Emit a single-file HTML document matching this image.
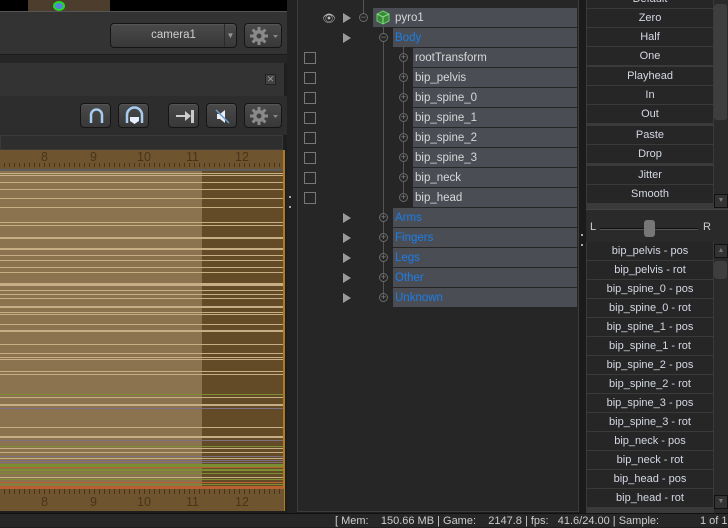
<!DOCTYPE html>
<html><head><meta charset="utf-8"><style>
*{margin:0;padding:0;box-sizing:border-box}
body{width:728px;height:527px;background:#1e1e1e;position:relative;overflow:hidden;font-family:"Liberation Sans",Tahoma,sans-serif;font-size:11px}
.a{position:absolute}
.btn{position:absolute;border:1px solid #151515;border-radius:4px;background:linear-gradient(#4a4a4a,#383838);box-shadow:inset 0 1px 0 #555}
.btn svg{position:absolute;left:0;top:0}
.row{position:absolute;height:19px;background:#4b4d55;color:#d8d8d8;line-height:20px;font-size:11.5px;padding-left:2px}
.grp{color:#1a7ee8}
.ln{position:absolute;left:0;width:283px;height:1px;background:#c8ae84}
.rb{position:absolute;left:587px;width:126px;height:18px;background:#262626;color:#d4d8e4;text-align:center;line-height:18px;font-size:11px}
.tri{position:absolute;width:0;height:0;border-top:5px solid transparent;border-bottom:5px solid transparent;border-left:8px solid #9a9a9a}
.pm{position:absolute;width:9px;height:9px;border:1px solid #6a6a6a;border-radius:50%;color:#888;font-size:9px;line-height:7px;text-align:center;background:#262626}
.cb{position:absolute;left:304px;width:12px;height:12px;border:1px solid #777}
.rn span{position:absolute;font-size:12.5px}
</style></head><body>
<div class="a" style="left:0;top:0;width:287px;height:11px;background:#000"></div>
<div class="a" style="left:28px;top:0;width:82px;height:11px;background:#4d3d2d"></div>
<div class="a" style="left:53px;top:1px;width:12px;height:10px;border-radius:50%;background:#5a7fe0;border:2px solid #1ee01e"></div>
<div class="a" style="left:0;top:11px;width:287px;height:43px;background:#333;border-top:1px solid #555"></div>
<div class="btn" style="left:110px;top:23px;width:127px;height:25px;color:#cfcfcf;text-align:center;line-height:23px;font-size:11.5px">camera1<span style="position:absolute;right:0;top:0;width:12px;height:23px;border-left:1px solid #2a2a2a;color:#999;font-size:8px">▼</span></div>
<div class="btn" style="left:244px;top:23px;width:38px;height:25px"><svg width="38" height="25"><g transform="translate(14,12)" fill="#8a8a8a"><circle r="6"/><g stroke="#8a8a8a" stroke-width="3"><line x1="0" y1="-9" x2="0" y2="9"/><line x1="-9" y1="0" x2="9" y2="0"/><line x1="-6.4" y1="-6.4" x2="6.4" y2="6.4"/><line x1="-6.4" y1="6.4" x2="6.4" y2="-6.4"/></g><circle r="2.5" fill="#404040"/></g><path d="M28 11h5l-2.5 3z" fill="#888"/></svg></div>
<div class="a" style="left:0;top:54px;width:287px;height:9px;background:#262626;border-top:1px solid #1a1a1a"></div>
<div class="a" style="left:0;top:63px;width:284px;height:33px;background:#333"></div>
<div class="a" style="left:265px;top:74px;width:11px;height:11px;background:#444;border:1px solid #222;color:#999;font-size:9px;line-height:9px;text-align:center">✕</div>
<div class="a" style="left:0;top:96px;width:287px;height:39px;background:#2d2d2d"></div>
<div class="btn" style="left:80px;top:103px;width:31px;height:25px"><svg width="31" height="25"><path d="M10 19V11a5.5 5.5 0 0 1 11 0v8" fill="none" stroke="#a8cdf0" stroke-width="2.5"/></svg></div>
<div class="btn" style="left:118px;top:103px;width:31px;height:25px"><svg width="31" height="25"><path d="M8 19V11a7.5 7.5 0 0 1 15 0v8" fill="none" stroke="#a8cdf0" stroke-width="2.5"/><path d="M11 13h9v4l-4.5 3l-4.5-3z" fill="#e8f0ff"/></svg></div>
<div class="btn" style="left:168px;top:103px;width:31px;height:25px"><svg width="31" height="25"><path d="M7 11h9V7l6 5l-6 5v-4H7z" fill="#ccc"/><rect x="22" y="6" width="3" height="13" fill="#ccc"/></svg></div>
<div class="btn" style="left:206px;top:103px;width:31px;height:25px"><svg width="31" height="25"><path d="M10 10h3l5-4v13l-5-4h-3z" fill="#e8eef8"/><line x1="9" y1="6" x2="22" y2="19" stroke="#6a9ad0" stroke-width="1.5"/></svg></div>
<div class="btn" style="left:244px;top:103px;width:38px;height:25px"><svg width="38" height="25"><g transform="translate(14,12)" fill="#8a8a8a"><circle r="6"/><g stroke="#8a8a8a" stroke-width="3"><line x1="0" y1="-9" x2="0" y2="9"/><line x1="-9" y1="0" x2="9" y2="0"/><line x1="-6.4" y1="-6.4" x2="6.4" y2="6.4"/><line x1="-6.4" y1="6.4" x2="6.4" y2="-6.4"/></g><circle r="2.5" fill="#404040"/></g><path d="M28 11h5l-2.5 3z" fill="#888"/></svg></div>
<div class="a" style="left:0;top:135px;width:283px;height:15px;background:#2e2e2e;border:1px solid #3a3a3a"></div>
<div class="a rn" style="left:0;top:150px;width:284px;height:21px;background:#6e5530;border-bottom:2px solid #5c5c5c;color:#4a3418">
<div class="a" style="left:0;top:13px;width:284px;height:4px;background:repeating-linear-gradient(90deg,transparent 0 4px,#4a3418 4px 5px)"></div>
<span style="left:41px;top:0">8</span><span style="left:90px;top:0">9</span><span style="left:137px;top:0">10</span><span style="left:186px;top:0">11</span><span style="left:235px;top:0">12</span></div>
<div class="a" style="left:0;top:171px;width:202px;height:318px;background:#8b7350"></div>
<div class="a" style="left:202px;top:171px;width:82px;height:318px;background:#634b27"></div>
<div class="a" style="left:283px;top:150px;width:2px;height:361px;background:#b07a20"></div>
<div class="ln" style="top:173px"></div><div class="ln" style="top:175px"></div><div class="ln" style="top:182px"></div><div class="ln" style="top:189px"></div><div class="ln" style="top:198px"></div><div class="ln" style="top:207px"></div><div class="ln" style="top:222px"></div><div class="ln" style="top:225px"></div><div class="ln" style="top:237px;height:2px"></div><div class="ln" style="top:248px;height:2px"></div><div class="ln" style="top:255px"></div><div class="ln" style="top:260px"></div><div class="ln" style="top:267px"></div><div class="ln" style="top:272px"></div><div class="ln" style="top:283px;height:3px"></div><div class="ln" style="top:290px"></div><div class="ln" style="top:294px"></div><div class="ln" style="top:298px"></div><div class="ln" style="top:306px;height:2px"></div><div class="ln" style="top:312px"></div><div class="ln" style="top:314px"></div><div class="ln" style="top:324px"></div><div class="ln" style="top:330px;height:2px"></div><div class="ln" style="top:344px"></div><div class="ln" style="top:353px"></div><div class="ln" style="top:357px"></div><div class="ln" style="top:359px"></div><div class="ln" style="top:371px"></div><div class="ln" style="top:374px"></div><div class="ln" style="top:394px;background:#7a9030"></div><div class="ln" style="top:397px"></div><div class="ln" style="top:404px;height:2px"></div><div class="ln" style="top:408px;background:#7a7080"></div><div class="ln" style="top:427px"></div><div class="ln" style="top:436px;height:2px"></div><div class="ln" style="top:440px;background:#7a7080"></div><div class="ln" style="top:446px;background:#7a9030"></div><div class="ln" style="top:448px"></div><div class="ln" style="top:452px"></div><div class="ln" style="top:456px;background:#7a7080"></div><div class="ln" style="top:458px"></div><div class="ln" style="top:460px;background:#7a7080"></div><div class="ln" style="top:462px;background:#7a7080"></div><div class="ln" style="top:464px;height:3px;background:#7a9030"></div><div class="ln" style="top:467px;background:#b86030"></div><div class="ln" style="top:469px;height:2px;background:#7a9030"></div><div class="ln" style="top:473px;background:#7a9030"></div><div class="ln" style="top:477px"></div><div class="ln" style="top:479px;background:#7a9030"></div><div class="ln" style="top:482px;background:#b86030"></div><div class="ln" style="top:484px;background:#7a9030"></div><div class="ln" style="top:486px;height:3px;background:#b86030"></div>
<div class="a rn" style="left:0;top:489px;width:284px;height:22px;background:#6e5530;color:#4a3418">
<div class="a" style="left:0;top:0;width:284px;height:5px;background:repeating-linear-gradient(90deg,transparent 0 4px,#4a3418 4px 5px)"></div>
<span style="left:41px;top:6px">8</span><span style="left:90px;top:6px">9</span><span style="left:137px;top:6px">10</span><span style="left:186px;top:6px">11</span><span style="left:235px;top:6px">12</span></div>
<div class="a" style="left:287px;top:0;width:10px;height:513px;background:#222"></div>
<div class="a" style="left:289px;top:196px;width:2px;height:12px;border-top:2px dotted #aaa;border-bottom:2px dotted #aaa"></div>
<div class="a" style="left:297px;top:0;width:282px;height:512px;background:#262626;border:1px solid #3c3c3c;border-top:none"></div>
<div class="a" style="left:579px;top:0;width:7px;height:513px;background:#1b1b1b"></div>
<div class="a" style="left:581px;top:234px;width:2px;height:12px;border-top:2px dotted #aaa;border-bottom:2px dotted #aaa"></div>
<div class="a" style="left:363px;top:0;width:1px;height:20px;background:#555"></div>
<div class="a" style="left:383px;top:20px;width:1px;height:280px;background:#555"></div>
<div class="a" style="left:403px;top:40px;width:1px;height:160px;background:#555"></div>
<div class="a" style="left:322px;top:12px;color:#bbb;font-size:11px">👁</div>
<div class="tri" style="left:343px;top:13px"></div><div class="pm" style="left:359px;top:13px">−</div>
<div class="row" style="left:373px;top:8px;width:204px;padding-left:22px">pyro1</div>
<svg class="a" style="left:376px;top:10px" width="14" height="15"><path d="M7 1l6 3v7l-6 3l-6-3V4z" fill="#3a8a3a" stroke="#6ad06a"/><path d="M1 4l6 3l6-3M7 7v7" fill="none" stroke="#8ae08a"/></svg>
<div class="tri" style="left:343px;top:33px"></div><div class="pm" style="left:379px;top:33px">−</div>
<div class="row grp" style="left:393px;top:28px;width:184px">Body</div>
<div class="cb" style="top:52px"></div><div class="pm" style="left:399px;top:53px">+</div><div class="row" style="left:413px;top:48px;width:164px">rootTransform</div>
<div class="cb" style="top:72px"></div><div class="pm" style="left:399px;top:73px">+</div><div class="row" style="left:413px;top:68px;width:164px">bip_pelvis</div>
<div class="cb" style="top:92px"></div><div class="pm" style="left:399px;top:93px">+</div><div class="row" style="left:413px;top:88px;width:164px">bip_spine_0</div>
<div class="cb" style="top:112px"></div><div class="pm" style="left:399px;top:113px">+</div><div class="row" style="left:413px;top:108px;width:164px">bip_spine_1</div>
<div class="cb" style="top:132px"></div><div class="pm" style="left:399px;top:133px">+</div><div class="row" style="left:413px;top:128px;width:164px">bip_spine_2</div>
<div class="cb" style="top:152px"></div><div class="pm" style="left:399px;top:153px">+</div><div class="row" style="left:413px;top:148px;width:164px">bip_spine_3</div>
<div class="cb" style="top:172px"></div><div class="pm" style="left:399px;top:173px">+</div><div class="row" style="left:413px;top:168px;width:164px">bip_neck</div>
<div class="cb" style="top:192px"></div><div class="pm" style="left:399px;top:193px">+</div><div class="row" style="left:413px;top:188px;width:164px">bip_head</div>
<div class="tri" style="left:343px;top:213px"></div><div class="pm" style="left:379px;top:213px">+</div><div class="row grp" style="left:393px;top:208px;width:184px">Arms</div>
<div class="tri" style="left:343px;top:233px"></div><div class="pm" style="left:379px;top:233px">+</div><div class="row grp" style="left:393px;top:228px;width:184px">Fingers</div>
<div class="tri" style="left:343px;top:253px"></div><div class="pm" style="left:379px;top:253px">+</div><div class="row grp" style="left:393px;top:248px;width:184px">Legs</div>
<div class="tri" style="left:343px;top:273px"></div><div class="pm" style="left:379px;top:273px">+</div><div class="row grp" style="left:393px;top:268px;width:184px">Other</div>
<div class="tri" style="left:343px;top:293px"></div><div class="pm" style="left:379px;top:293px">+</div><div class="row grp" style="left:393px;top:288px;width:184px">Unknown</div>
<div class="a" style="left:586px;top:0;width:142px;height:209px;background:#3a3a3a"></div>
<div class="rb" style="top:-10px">Default</div><div class="rb" style="top:9px">Zero</div><div class="rb" style="top:28px">Half</div><div class="rb" style="top:47px">One</div>
<div class="rb" style="top:67px">Playhead</div><div class="rb" style="top:86px">In</div><div class="rb" style="top:105px">Out</div>
<div class="rb" style="top:126px">Paste</div><div class="rb" style="top:145px">Drop</div>
<div class="rb" style="top:166px">Jitter</div><div class="rb" style="top:185px">Smooth</div>
<div class="a" style="left:714px;top:0;width:14px;height:208px;background:#2a2a2a"></div>
<div class="a" style="left:714px;top:4px;width:13px;height:116px;background:#3e3e3e;border-radius:3px"></div>
<div class="a" style="left:714px;top:194px;width:14px;height:14px;background:#333;border:1px solid #111;color:#777;font-size:7px;text-align:center;line-height:12px">▼</div>
<div class="a" style="left:586px;top:209px;width:142px;height:33px;background:#2a2a2a;border-top:1px solid #444"></div>
<div class="a" style="left:590px;top:221px;color:#ccc">L</div><div class="a" style="left:703px;top:221px;color:#ccc">R</div>
<div class="a" style="left:600px;top:228px;width:98px;height:2px;background:#111;border-bottom:1px solid #555"></div>
<div class="a" style="left:644px;top:220px;width:11px;height:17px;background:#777;border-radius:3px"></div>
<div class="a" style="left:586px;top:242px;width:128px;height:271px;background:#3a3a3a"></div>
<div class="a" style="left:714px;top:242px;width:14px;height:271px;background:#2a2a2a"></div>
<div class="rb" style="top:242px">bip_pelvis - pos</div><div class="rb" style="top:261px">bip_pelvis - rot</div><div class="rb" style="top:280px">bip_spine_0 - pos</div><div class="rb" style="top:299px">bip_spine_0 - rot</div><div class="rb" style="top:318px">bip_spine_1 - pos</div><div class="rb" style="top:337px">bip_spine_1 - rot</div><div class="rb" style="top:356px">bip_spine_2 - pos</div><div class="rb" style="top:375px">bip_spine_2 - rot</div><div class="rb" style="top:394px">bip_spine_3 - pos</div><div class="rb" style="top:413px">bip_spine_3 - rot</div><div class="rb" style="top:432px">bip_neck - pos</div><div class="rb" style="top:451px">bip_neck - rot</div><div class="rb" style="top:470px">bip_head - pos</div><div class="rb" style="top:489px">bip_head - rot</div>
<div class="a" style="left:714px;top:244px;width:14px;height:14px;background:#333;border:1px solid #111;color:#777;font-size:7px;text-align:center;line-height:12px">▲</div>
<div class="a" style="left:714px;top:261px;width:13px;height:18px;background:#3e3e3e;border-radius:3px"></div>
<div class="a" style="left:714px;top:495px;width:14px;height:14px;background:#333;border:1px solid #111;color:#777;font-size:7px;text-align:center;line-height:12px">▼</div>
<div class="a" style="left:0;top:513px;width:728px;height:14px;background:#272727;border-top:1px solid #111;color:#ccc;font-size:11px;line-height:14px;white-space:pre"><span class="a" style="left:335px;top:0">[ Mem:    150.66 MB | Game:    2147.8 | fps:   41.6/24.00 | Sample:</span><span class="a" style="left:700px;top:0">1 of 1</span></div>
</body></html>
